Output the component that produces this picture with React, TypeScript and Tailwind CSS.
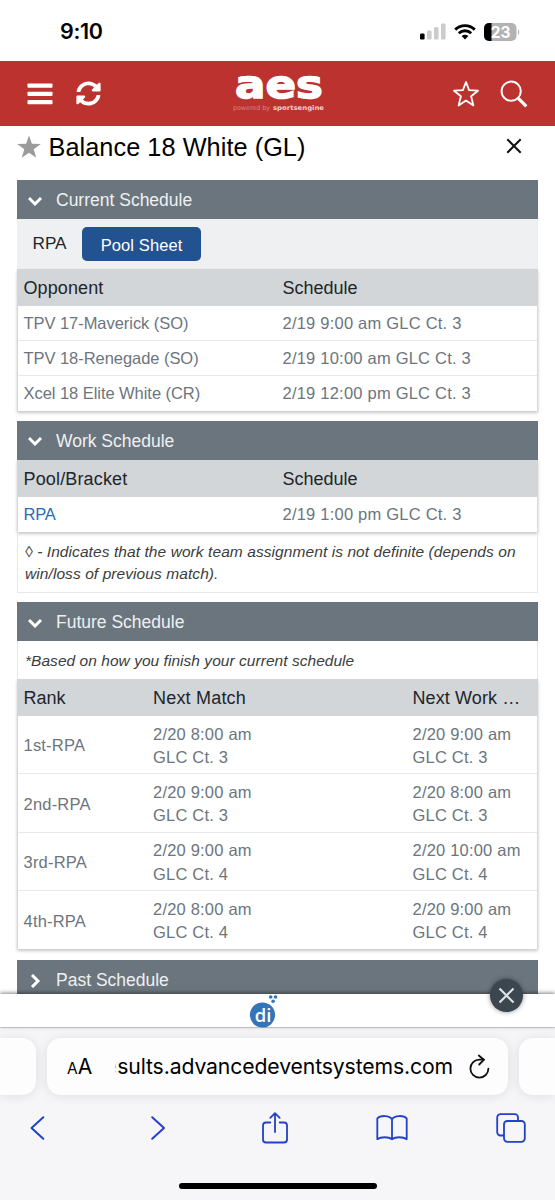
import React, { useState } from 'react'
import { FaSyncAlt } from 'react-icons/fa'

interface MatchRow {
  name: string
  schedule: string
}

interface FutureRow {
  rank: string
  match: [string, string]
  work: [string, string]
}

const currentRows: MatchRow[] = [
  { name: 'TPV 17-Maverick (SO)', schedule: '2/19 9:00 am GLC Ct. 3' },
  { name: 'TPV 18-Renegade (SO)', schedule: '2/19 10:00 am GLC Ct. 3' },
  { name: 'Xcel 18 Elite White (CR)', schedule: '2/19 12:00 pm GLC Ct. 3' },
]

const futureRows: FutureRow[] = [
  { rank: '1st-RPA', match: ['2/20 8:00 am', 'GLC Ct. 3'], work: ['2/20 9:00 am', 'GLC Ct. 3'] },
  { rank: '2nd-RPA', match: ['2/20 9:00 am', 'GLC Ct. 3'], work: ['2/20 8:00 am', 'GLC Ct. 3'] },
  { rank: '3rd-RPA', match: ['2/20 9:00 am', 'GLC Ct. 4'], work: ['2/20 10:00 am', 'GLC Ct. 4'] },
  { rank: '4th-RPA', match: ['2/20 8:00 am', 'GLC Ct. 4'], work: ['2/20 9:00 am', 'GLC Ct. 4'] },
]

function StatusBar() {
  return (
    <div className="flex h-[61px] shrink-0 items-center justify-between bg-white pl-[60px] pr-[35px] pt-[2px]">
      <span className="font-['Inter',sans-serif] text-[21.5px] font-semibold tracking-[-0.3px] text-black">9:10</span>
      <div className="flex items-center">
        <svg width="26" height="17" viewBox="0 0 26 17">
          <rect x="0" y="10.5" width="4.6" height="6" rx="1.3" fill="#000" />
          <rect x="7" y="7.5" width="4.6" height="9" rx="1.3" fill="#ccc" />
          <rect x="14" y="4" width="4.6" height="12.5" rx="1.3" fill="#ccc" />
          <rect x="21" y="0.5" width="4.6" height="16" rx="1.3" fill="#ccc" />
        </svg>
        <svg className="ml-2" width="22" height="16" viewBox="0 0 22 16" fill="none" stroke="#000" strokeWidth="2.9">
          <path d="M1.2 5.6C6.8.3 15.2.3 20.8 5.6" />
          <path d="M4.8 9.2c3.6-3.3 8.8-3.3 12.4 0" />
          <path d="M7.6 12.1c2-1.8 4.8-1.8 6.8 0L11 15.5z" fill="#000" stroke="none" />
        </svg>
        <svg className="ml-2" width="36" height="18" viewBox="0 0 36 18">
          <clipPath id="battery">
            <rect x="0" y="0" width="32.5" height="18" rx="5" />
          </clipPath>
          <g clipPath="url(#battery)">
            <rect width="33" height="18" fill="#b3b3b3" />
            <rect width="7.5" height="18" fill="#000" />
          </g>
          <path d="M34 6.2c1.6.8 1.6 4.8 0 5.6z" fill="#b3b3b3" />
          <text x="16.7" y="14.6" textAnchor="middle" fontFamily="Inter, sans-serif" fontSize="15.5" fontWeight="700" fill="#fff">
            23
          </text>
        </svg>
      </div>
    </div>
  )
}

function AesLogo() {
  return (
    <div className="flex h-[65px] flex-col items-center">
      <svg className="mt-[4px]" width="96" height="38" viewBox="0 0 96 38" fill="#fff">
        <text
          x="5"
          y="32.5"
          fontFamily="'DejaVu Sans', sans-serif"
          fontSize="38.5"
          fontWeight="700"
          textLength="88"
          lengthAdjust="spacingAndGlyphs"
          stroke="#fff"
          strokeWidth="1.4"
        >
          aes
        </text>
      </svg>
      <svg width="96" height="9" viewBox="0 0 96 9">
        <text x="3" y="6.5" fontFamily="'DejaVu Sans', sans-serif" fontSize="6.5" fill="#dc8481" textLength="37" lengthAdjust="spacingAndGlyphs">
          powered by
        </text>
        <text x="43" y="6.5" fontFamily="'DejaVu Sans', sans-serif" fontSize="6.5" fontWeight="700" fill="#f3cfcd" textLength="51" lengthAdjust="spacingAndGlyphs">
          sportsengine
        </text>
      </svg>
    </div>
  )
}

function AppHeader() {
  return (
    <header className="grid h-[65px] shrink-0 grid-cols-[1fr_96px_1fr] items-center bg-[#bc322f] text-white">
      <div className="flex items-center gap-[23px] pl-[27px]">
        <svg width="26" height="22" viewBox="0 0 26 22" fill="#fff">
          <rect x="0.5" y="0.5" width="25" height="4.2" rx="0.8" />
          <rect x="0.5" y="8.8" width="25" height="4.2" rx="0.8" />
          <rect x="0.5" y="17.1" width="25" height="4.2" rx="0.8" />
        </svg>
        <FaSyncAlt className="size-[25px]" />
      </div>
      <AesLogo />
      <div className="flex items-center justify-end gap-[20px] pr-[27px]">
        <svg width="28" height="28" viewBox="0 0 28 28" fill="none" stroke="#fff" strokeWidth="1.8" strokeLinejoin="round">
          <path d="M14 2l3.1 8.1 8.9.6-6.9 5.6 2.3 9.2L14 20.6l-7.4 4.9 2.3-9.2L2 10.7l8.9-.6z" />
        </svg>
        <svg width="28" height="28" viewBox="0 0 28 28" fill="none" stroke="#fff">
          <circle cx="11.2" cy="11.2" r="9.6" strokeWidth="2" />
          <path d="M18.3 18.3l8 8" strokeWidth="3.2" />
        </svg>
      </div>
    </header>
  )
}

interface SectionHeaderProps {
  title: string
  open: boolean
  onToggle: () => void
}

function SectionHeader({ title, open, onToggle }: SectionHeaderProps) {
  return (
    <button
      type="button"
      onClick={onToggle}
      className="flex h-[39px] w-full items-center bg-[#6b757d] pl-[11px] pt-[2px] text-left text-[17.5px] text-[#eef0f2]"
    >
      <span className="flex w-[28px] items-center">
        <svg className={open ? '' : '-rotate-90'} width="14" height="14" viewBox="0 0 14 14" fill="none" stroke="#fff" strokeWidth="3">
          <path d="M1 4l6 6 6-6" />
        </svg>
      </span>
      {title}
    </button>
  )
}

function Section({ title, defaultOpen = true, className = '', children }: { title: string; defaultOpen?: boolean; className?: string; children?: React.ReactNode }) {
  const [open, setOpen] = useState(defaultOpen)
  return (
    <section className={`mx-[17px] shrink-0 ${className}`}>
      <SectionHeader title={title} open={open} onToggle={() => setOpen(!open)} />
      {open && children}
    </section>
  )
}

function MatchTable({ firstColumn, rows, link = false }: { firstColumn: string; rows: MatchRow[]; link?: boolean }) {
  return (
    <div className="border-x border-[#d6d8da] bg-white shadow-[0_2px_3px_rgba(0,0,0,0.22)]">
      <div className="-mx-px grid h-[37px] grid-cols-[259px_1fr] items-center bg-[#d2d6d9] pl-[6.5px] pt-[2px] text-[18px] text-[#212529]">
        <span className={link ? 'tracking-[0.15px]' : 'tracking-[0.1px]'}>{firstColumn}</span>
        <span>Schedule</span>
      </div>
      {rows.map((row) => (
        <div
          key={row.name}
          className="grid h-[35px] grid-cols-[259px_1fr] items-center border-b border-[#e6e8ea] pl-[5.5px] pt-px text-[16.5px] text-[#6c757d] last:border-b-0"
        >
          <span className={link ? 'tracking-[-0.2px] text-[#2b6cb8]' : 'tracking-[-0.05px]'}>{row.name}</span>
          <span className="tracking-[0.22px]">{row.schedule}</span>
        </div>
      ))}
    </div>
  )
}

function FutureTable() {
  return (
    <div className="border-x border-[#d6d8da] bg-white shadow-[0_2px_3px_rgba(0,0,0,0.22)]">
      <div className="-mx-px grid h-[37px] grid-cols-[129.5px_259.5px_1fr] items-center bg-[#d2d6d9] pl-[6.5px] pt-[2px] text-[18px] text-[#212529]">
        <span>Rank</span>
        <span className="tracking-[0.2px]">Next Match</span>
        <span className="whitespace-nowrap tracking-[0.1px]">Next Work …</span>
      </div>
      {futureRows.map((row) => (
        <div
          key={row.rank}
          className="grid h-[58.25px] grid-cols-[129.5px_259.5px_1fr] items-center border-b border-[#e6e8ea] pl-[5.5px] pt-[3px] text-[16.5px] leading-[23.5px] tracking-[0.2px] text-[#6c757d] last:border-b-0"
        >
          <span>{row.rank}</span>
          <span>
            {row.match[0]}
            <br />
            {row.match[1]}
          </span>
          <span>
            {row.work[0]}
            <br />
            {row.work[1]}
          </span>
        </div>
      ))}
    </div>
  )
}

function AdBanner() {
  return (
    <div className="relative flex h-[33px] shrink-0 justify-center bg-white shadow-[0_-1px_4px_rgba(0,0,0,0.5)]">
      <svg className="-ml-[27px] -mt-px" width="30" height="35" viewBox="0 0 30 35">
        <circle cx="13.5" cy="22" r="12.6" fill="#3474b8" />
        <circle cx="21.7" cy="4" r="1.8" fill="#3474b8" />
        <circle cx="26.5" cy="4" r="1.8" fill="#3474b8" />
        <circle cx="24.1" cy="8.2" r="1.8" fill="#3474b8" />
        <text x="14" y="28.8" textAnchor="middle" fontFamily="'Open Sans', sans-serif" fontSize="18.5" fontWeight="600" fill="#fff">
          di
        </text>
      </svg>
      <button
        type="button"
        aria-label="Close"
        className="absolute -top-[15px] right-[32px] flex size-[33px] items-center justify-center rounded-full bg-[#3b464f] shadow-[0_0_5px_rgba(0,0,0,0.45)]"
      >
        <svg width="17" height="17" viewBox="0 0 17 17" stroke="#dfe2e4" strokeWidth="2.2">
          <path d="M1.5 1.5l14 14M15.5 1.5l-14 14" />
        </svg>
      </button>
    </div>
  )
}

function BrowserBar() {
  return (
    <div className="flex h-[173px] shrink-0 flex-col border-t border-[#d9d9db] bg-[#f6f6f8] pt-[10px]">
      <div className="flex h-[57px] shrink-0 gap-[11px]">
        <div className="w-[36px] rounded-r-[14px] bg-[#fdfdfd] shadow-[0_1px_12px_rgba(0,0,0,0.1)]" />
        <div className="flex flex-1 items-center rounded-[14px] bg-[#fdfdfd] pl-[20px] font-['Inter',sans-serif] text-black shadow-[0_1px_12px_rgba(0,0,0,0.1)]">
          <span className="flex w-[48px] items-baseline">
            <span className="text-[15.5px]">A</span>
            <span className="text-[21px]">A</span>
          </span>
          <span className="flex w-[338px] pt-px text-[21.2px]">
            <span className="flex w-[4px] justify-end overflow-hidden text-[#c4c4c4]">e</span>
            <span className="whitespace-nowrap tracking-[-0.12px]">sults.advancedeventsystems.com</span>
          </span>
          <svg className="ml-[16px]" width="22" height="26" viewBox="0 0 22 26" fill="none" stroke="#111" strokeWidth="1.8" strokeLinecap="round" strokeLinejoin="round">
            <path d="M19.4 14.6A9 9 0 1 1 10.6 5.6h4.4" />
            <path d="M9.8 1.5l5 4.3-4.6 4.7" />
          </svg>
        </div>
        <div className="w-[36px] rounded-l-[14px] bg-[#fdfdfd] shadow-[0_1px_12px_rgba(0,0,0,0.1)]" />
      </div>
      <div className="grid h-[66px] shrink-0 grid-cols-[77px_162px_72px_162px_1fr] items-center text-[#2440c4]">
        <svg className="ml-[29px]" width="16" height="26" viewBox="0 0 16 26" fill="none" stroke="currentColor" strokeWidth="2" strokeLinecap="round" strokeLinejoin="round">
          <path d="M14.3 2.2L2.5 13l11.8 10.8" />
        </svg>
        <svg className="mx-auto" width="16" height="26" viewBox="0 0 16 26" fill="none" stroke="currentColor" strokeWidth="2" strokeLinecap="round" strokeLinejoin="round">
          <path d="M2.2 2.2L14 13 2.2 23.800" />
        </svg>
        <svg className="mx-auto" width="28" height="34" viewBox="0 0 28 34" fill="none" stroke="currentColor" strokeWidth="1.8" strokeLinecap="round" strokeLinejoin="round">
          <path d="M9.3 11.5H5a3 3 0 0 0-3 3v14a3 3 0 0 0 3 3h18a3 3 0 0 0 3-3v-14a3 3 0 0 0-3-3h-4.3" />
          <path d="M14 21V2.200M9.300 6.800L14 2.200l4.700 4.600" />
        </svg>
        <svg className="mx-auto" width="32" height="28" viewBox="0 0 32 28" fill="none" stroke="currentColor" strokeWidth="1.8" strokeLinejoin="round">
          <path d="M16 5.200C13.500 1.200 4.500 1 1.300 4.400v20.800c3.400-2.600 11.500-2.600 14.700 0 3.200-2.600 11.300-2.600 14.700 0V4.400C27.500 1 18.500 1.200 16 5.200zv20" />
        </svg>
        <svg className="ml-[23px]" width="30" height="30" viewBox="0 0 30 30" fill="none" stroke="currentColor" strokeWidth="1.8">
          <path d="M8 22.500H4.500a3.300 3.300 0 0 1-3.300-3.300V4.500a3.300 3.300 0 0 1 3.300-3.300h14.200A3.300 3.300 0 0 1 22 4.500V8" />
          <rect x="8" y="8" width="20.800" height="20.800" rx="3.300" />
        </svg>
      </div>
      <div className="mx-auto mt-[22px] h-[6px] w-[198px] shrink-0 rounded-full bg-black" />
    </div>
  )
}

export default function App() {
  return (
    <div className="flex h-[1200px] w-[555px] flex-col overflow-hidden bg-white font-['Liberation_Sans',Arial,sans-serif]">
      <StatusBar />
      <AppHeader />
      <main className="flex min-h-0 flex-1 flex-col overflow-hidden">
        <div className="flex h-[54px] shrink-0 items-center pb-[11px] pl-[17px] pr-[33px]">
          <svg className="-mt-[2px]" width="24" height="24" viewBox="0 0 24 24" fill="#9b9b9b">
            <path d="M12 .5l2.900 8.300 8.900.1-7.100 5.300 2.600 8.600L12 17.700l-7.300 5.100 2.600-8.600L.2 8.900l8.900-.1z" />
          </svg>
          <h1 className="ml-[7.500px] flex-1 text-[25.3px] leading-none tracking-[0.05px] text-black">Balance 18 White (GL)</h1>
          <svg className="-mt-[3px]" width="16" height="16" viewBox="0 0 16 16" stroke="#111" strokeWidth="2">
            <path d="M1.3 1.3l13.4 13.4M14.7 1.3L1.3 14.7" />
          </svg>
        </div>

        <Section title="Current Schedule">
          <div className="flex h-[49.5px] items-center gap-[15.5px] bg-[#eef0f2] pl-[15.5px] text-[#212529]">
            <span className="text-[17.2px]">RPA</span>
            <button type="button" className="h-[34px] w-[119px] rounded-[5px] bg-[#22528f] pt-[3px] text-[16.5px] tracking-[0.1px] text-white">
              Pool Sheet
            </button>
          </div>
          <MatchTable firstColumn="Opponent" rows={currentRows} />
        </Section>

        <Section title="Work Schedule" className="mt-[10px]">
          <MatchTable firstColumn="Pool/Bracket" rows={[{ name: 'RPA', schedule: '2/19 1:00 pm GLC Ct. 3' }]} link />
          <p className="h-[61px] border border-t-0 border-[#e6e8ea] pl-[7px] pt-[9px] text-[15.5px] italic leading-[22px] tracking-[0.08px] text-[#3c3c3c]">
            ◊ - Indicates that the work team assignment is not definite (depends on
            <br />
            win/loss of previous match).
          </p>
        </Section>

        <Section title="Future Schedule" className="mt-[9.5px]">
          <p className="h-[38px] border-x border-[#e6e8ea] pl-[7px] pt-[9px] text-[15.5px] italic leading-[22px] tracking-[0.04px] text-[#3c3c3c]">
            *Based on how you finish your current schedule
          </p>
          <FutureTable />
        </Section>

        <Section title="Past Schedule" defaultOpen={false} className="mt-[11px]" />
      </main>
      <AdBanner />
      <BrowserBar />
    </div>
  )
}
